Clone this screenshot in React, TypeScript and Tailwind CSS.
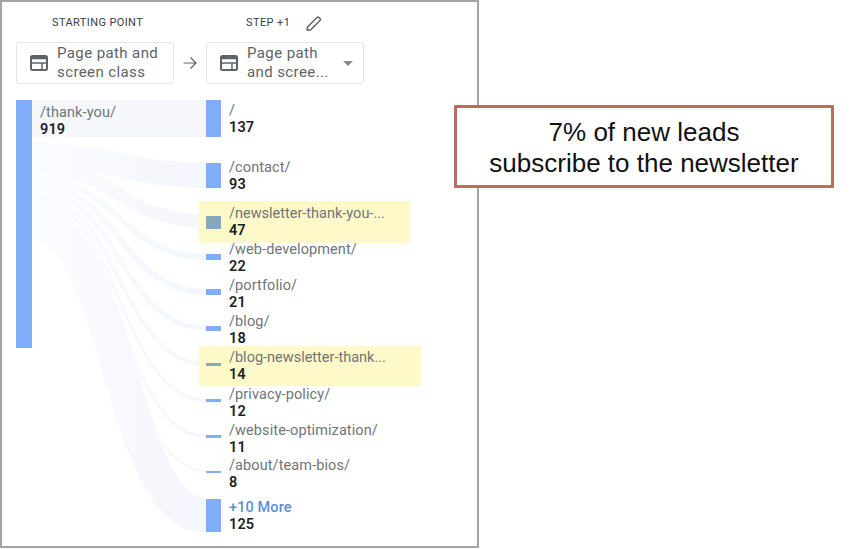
const LINKS = [
  { d: "M32 155 C119 155 119 175 206 175", w: 25 },
  { d: "M32 168 C119 168 119 221 206 221", w: 13 },
  { d: "M32 178 C119 178 119 257 206 257", w: 6 },
  { d: "M32 184 C119 184 119 292 206 292", w: 6 },
  { d: "M32 189 C119 189 119 328 206 328", w: 5 },
  { d: "M32 194 C119 194 119 364 206 364", w: 4 },
  { d: "M32 197 C119 197 119 400 206 400", w: 3 },
  { d: "M32 200 C119 200 119 436 206 436", w: 3 },
  { d: "M32 203 C119 203 119 471 206 471", w: 2 },
  { d: "M32 221 C119 221 119 516 206 516", w: 34 },
];

function ScreenIcon() {
  return (
    <svg width="18" height="16" viewBox="0 0 18 16" className="shrink-0" fill="none" stroke="#5f6368">
      <rect x="1" y="1" width="16" height="14" rx="1.5" strokeWidth="2" />
      <path d="M1 3H17" strokeWidth="2.5" />
      <path d="M1 8H17M12 8V15" strokeWidth="1.5" />
    </svg>
  );
}

function SelectCard({ lines, caret }: { lines: string[]; caret?: boolean }) {
  return (
    <div className="flex h-[42px] w-[158px] items-center rounded-[3px] border border-[#e3e5e8] bg-white pl-[13px]">
      <ScreenIcon />
      <div className="ml-[9px] text-[15px] leading-[19px] tracking-[0.4px] text-[#5f6368]">
        {lines.map((l) => (
          <div key={l}>{l}</div>
        ))}
      </div>
      {caret && <div className="ml-auto mr-[10px] h-0 w-0 border-x-[5px] border-t-[5px] border-x-transparent border-t-[#85888c]" />}
    </div>
  );
}

function Row({
  label,
  value,
  rowClass,
  barClass,
  textClass,
  more,
}: {
  label: string;
  value: string;
  rowClass: string;
  barClass: string;
  textClass?: string;
  more?: boolean;
}) {
  return (
    <div className={`flex items-center ${rowClass}`}>
      <div className={`w-[15px] shrink-0 ${barClass}`} />
      <div className={`ml-2 whitespace-nowrap text-[14.5px] leading-[17px] ${textClass ?? "tracking-[0.1px]"}`}>
        <div className={more ? "font-medium text-[#5a8fdc]" : "text-[#70757a]"}>{label}</div>
        <div className="font-semibold text-[#202124]">{value}</div>
      </div>
    </div>
  );
}

export default function App() {
  return (
    <div className="flex h-[549px] w-[850px] items-start overflow-hidden bg-white font-['Roboto',sans-serif]">
      <div className="relative h-[548px] w-[479px] shrink-0 border-2 border-[#a4a4a4] bg-white pl-[14px] pt-[13px]">
        <svg className="absolute -left-[2px] -top-[2px]" width="479" height="548" fill="none">
          <defs>
            <linearGradient id="fade" gradientUnits="userSpaceOnUse" x1="32" y1="0" x2="206" y2="0">
              <stop offset="0" stopColor="#fbfcff" />
              <stop offset="1" stopColor="#f4f6fd" />
            </linearGradient>
          </defs>
          <rect x="32" y="100" width="174" height="37" fill="#f5f7fd" />
          {LINKS.map((l) => (
            <path key={l.d} d={l.d} stroke="url(#fade)" strokeWidth={l.w} />
          ))}
        </svg>

        <div className="relative flex h-[15px] items-center pt-[2px] text-[11px] tracking-[0.4px] text-[#3c4043]">
          <div className="w-[190px] pl-[36px]">STARTING POINT</div>
          <div className="pl-[40px]">STEP +1</div>
          <svg className="ml-[15px]" width="17" height="17" viewBox="0 0 17 17" fill="none" stroke="#5f6368" strokeWidth="1.5" strokeLinejoin="round">
            <path d="M2 15L2.5 12L12 2.5Q13 1.5 14 2.5L15 3.5Q16 4.5 15 5.5L5.5 15Z" />
          </svg>
        </div>

        <div className="relative mt-[12px] flex items-center">
          <SelectCard lines={["Page path and", "screen class"]} />
          <svg className="mx-[8px]" width="16" height="16" viewBox="0 0 16 16" fill="none" stroke="#5f6368" strokeWidth="1.2">
            <path d="M1.5 8H14M8.5 2.5L14 8L8.5 13.5" />
          </svg>
          <SelectCard lines={["Page path", "and scree..."]} caret />
        </div>

        <div className="relative mt-[16px] flex">
          <div className="flex w-[190px] shrink-0 items-start">
            <div className="h-[248px] w-[16px] bg-[#7fadf7]" />
            <div className="ml-2 mt-[5px] text-[14.5px] leading-[16.5px] tracking-[0.1px]">
              <div className="text-[#70757a]">/thank-you/</div>
              <div className="font-semibold text-[#202124]">919</div>
            </div>
          </div>

          <div className="flex flex-col">
            <Row label="/" value="137" rowClass="h-[37px]" barClass="h-[37px] bg-[#7fadf7]" />
            <Row label="/contact/" value="93" rowClass="mt-[26px] h-[25px]" barClass="h-[25px] bg-[#7fadf7]" textClass="mt-[1px] tracking-[0.1px]" />
            <Row label="/newsletter-thank-you-..." value="47" rowClass="mt-[13px] -ml-[7px] h-[42px] w-[211px] bg-[#fdf9c8] pl-[7px]" barClass="h-[13px] bg-[#85a9bb]" textClass="tracking-normal" />
            <Row label="/web-development/" value="22" rowClass="h-[28px]" barClass="h-[6px] bg-[#7fadf7]" textClass="mt-[2px] tracking-[0.1px]" />
            <Row label="/portfolio/" value="21" rowClass="mt-[3px] h-[36px]" barClass="h-[6px] bg-[#7fadf7]" textClass="mt-[4px] tracking-[0.1px]" />
            <Row label="/blog/" value="18" rowClass="h-[36px]" barClass="h-[5px] bg-[#7fadf7]" textClass="mt-[4px] tracking-[0.1px]" />
            <Row label="/blog-newsletter-thank..." value="14" rowClass="-ml-[7px] h-[40px] w-[222px] bg-[#fdf9c8] pb-[3px] pl-[7px]" barClass="h-[3px] bg-[#85a9bb]" textClass="mt-[3px] tracking-normal" />
            <Row label="/privacy-policy/" value="12" rowClass="h-[28px]" barClass="h-[3px] bg-[#7fadf7]" textClass="mt-[5px] tracking-[0.1px]" />
            <Row label="/website-optimization/" value="11" rowClass="mt-[4px] h-[36px]" barClass="h-[3px] bg-[#7fadf7]" textClass="mt-[5px] tracking-[0.1px]" />
            <Row label="/about/team-bios/" value="8" rowClass="h-[35px]" barClass="h-[2px] bg-[#7fadf7]" textClass="mt-[5px] tracking-[0.1px]" />
            <Row label="+10 More" value="125" rowClass="mt-[10px] h-[33px]" barClass="h-[33px] bg-[#7fadf7]" more />
          </div>
        </div>
      </div>

      <div className="relative z-10 -ml-[25px] mt-[105px] flex h-[83px] w-[380px] shrink-0 flex-col items-center justify-center rounded-[1px] border-[3px] border-[#bd6a5f] bg-white pt-[2px] font-['Liberation_Sans',sans-serif] text-[26px] leading-[31px] text-[#111]">
        <div>7% of new leads</div>
        <div>subscribe to the newsletter</div>
      </div>
    </div>
  );
}
